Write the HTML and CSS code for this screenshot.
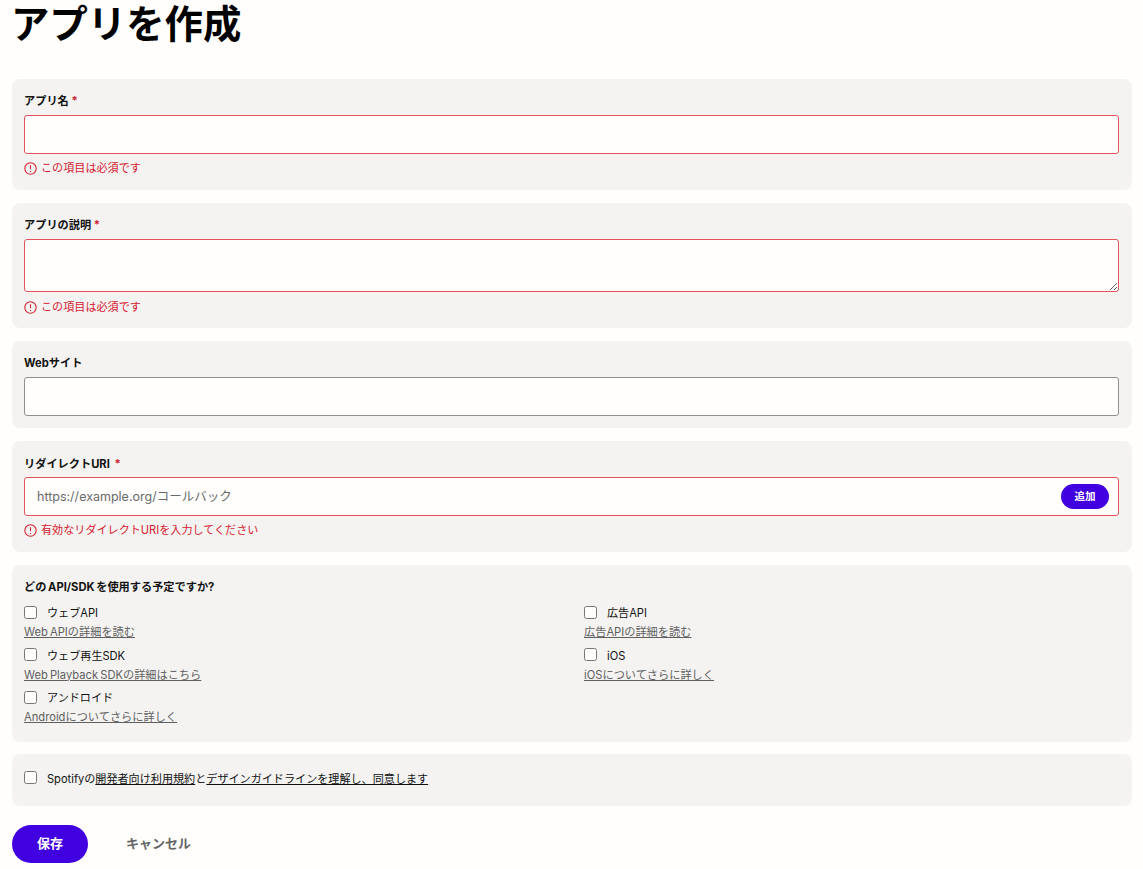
FILE: index.html
```html
<!DOCTYPE html>
<html lang="ja">
<head>
<meta charset="utf-8">
<title>アプリを作成</title>
<link rel="stylesheet" href="styles.css">
</head>
<body>
<main class="page">
  <h1 class="title">アプリを作成</h1>
  <form class="form">
    <section class="card card-name">
      <label class="label">アプリ名 <span class="req">*</span></label>
      <input class="field invalid" type="text">
      <p class="error"><svg class="err-icon" viewBox="0 0 12 12"><circle cx="6" cy="6" r="5.25"/><path d="M6 2.9v3.8M6 8.2v1"/></svg>この項目は必須です</p>
    </section>
    <section class="card card-desc">
      <label class="label">アプリの説明 <span class="req">*</span></label>
      <textarea class="field area invalid"></textarea>
      <p class="error"><svg class="err-icon" viewBox="0 0 12 12"><circle cx="6" cy="6" r="5.25"/><path d="M6 2.9v3.8M6 8.2v1"/></svg>この項目は必須です</p>
    </section>
    <section class="card card-web">
      <label class="label">Webサイト</label>
      <input class="field" type="text">
    </section>
    <section class="card card-uri">
      <label class="label">リダイレクトURI <span class="req req-gap">*</span></label>
      <div class="uri-field invalid">
        <span class="placeholder">https://example.org/コールバック</span>
        <button class="add" type="button">追加</button>
      </div>
      <p class="error"><svg class="err-icon" viewBox="0 0 12 12"><circle cx="6" cy="6" r="5.25"/><path d="M6 2.9v3.8M6 8.2v1"/></svg>有効なリダイレクトURIを入力してください</p>
    </section>
    <section class="card card-api">
      <p class="label q">どの API/SDK を使用する予定ですか?</p>
      <div class="api-grid">
        <div class="api">
          <label class="check"><input type="checkbox"><span>ウェブAPI</span></label>
          <a class="more" href="#">Web APIの詳細を読む</a>
        </div>
        <div class="api">
          <label class="check"><input type="checkbox"><span>広告API</span></label>
          <a class="more" href="#">広告APIの詳細を読む</a>
        </div>
        <div class="api">
          <label class="check"><input type="checkbox"><span>ウェブ再生SDK</span></label>
          <a class="more" href="#">Web Playback SDKの詳細はこちら</a>
        </div>
        <div class="api">
          <label class="check"><input type="checkbox"><span>iOS</span></label>
          <a class="more" href="#">iOSについてさらに詳しく</a>
        </div>
        <div class="api">
          <label class="check"><input type="checkbox"><span>アンドロイド</span></label>
          <a class="more" href="#">Androidについてさらに詳しく</a>
        </div>
      </div>
    </section>
    <section class="card card-terms">
      <label class="check"><input type="checkbox"><span class="terms">Spotifyの<a href="#">開発者向け利用規約</a>と<a href="#">デザインガイドラインを理解し、同意します</a></span></label>
    </section>
    <div class="actions">
      <button class="save" type="button">保存</button>
      <button class="cancel" type="button">キャンセル</button>
    </div>
  </form>
</main>
</body>
</html>
```

FILE: styles.css
```css
* { box-sizing: border-box; }
html, body { margin: 0; padding: 0; background: #fffefd; }
body {
  font-family: Inter, "Noto Sans CJK JP", sans-serif;
  color: #111;
  font-size: 12px;
}
.page { padding: 0 11px 0 12px; }
.title {
  margin: 0 0 0 -1px;
  height: 79px;
  font-size: 38.4px;
  line-height: 48px;
  font-weight: 700;
  color: #000;
}
.form { display: flex; flex-direction: column; gap: 13px; }
.card {
  background: #f4f3f2;
  border-radius: 8px;
  padding: 13px 13px 0 12px;
}
.card-name { height: 111px; }
.card-desc { height: 125px; }
.card-web { height: 87px; }
.card-uri { height: 111px; padding-top: 14px; }
.card-api { height: 177px; }
.card-terms { height: 52px; padding-top: 15px; margin-top: -1px; }
.label {
  display: block;
  margin: 0 0 5px;
  height: 18px;
  font-size: 11.2px;
  line-height: 18px;
  font-weight: 700;
  color: #111;
}
.card-uri .label { margin-bottom: 4px; }
.req { color: #d5202f; }
.req-gap { margin-left: 2px; }
.field {
  display: block;
  width: 100%;
  height: 39px;
  margin: 0;
  background: #fffefd;
  border: 1px solid #8f8f8f;
  border-radius: 3px;
  outline: none;
  padding: 0 12px;
  font: inherit;
}
.area { height: 53px; resize: vertical; }
.invalid { border: 1px solid #e2535c; }
.uri-field {
  display: flex;
  align-items: center;
  justify-content: space-between;
  height: 39px;
  background: #fffefd;
  border-radius: 3px;
  padding: 0 9px 0 12px;
}
.placeholder { font-size: 12.5px; color: #6a6a6a; margin-bottom: 2px; }
.add {
  width: 48px;
  height: 25px;
  border: 0;
  border-radius: 13px;
  background: #4100e0;
  color: #fff;
  font: 700 10.5px Inter, "Noto Sans CJK JP", sans-serif;
  padding: 0 0 2px;
}
.error {
  display: flex;
  align-items: center;
  gap: 4px;
  margin: 6px 0 0;
  height: 16px;
  font-size: 11.1px;
  line-height: 16px;
  color: #d5202f;
}
.card-desc .error { margin-top: 7px; }
.err-icon {
  flex: none;
  width: 13px;
  height: 13px;
  fill: none;
  stroke: #d5202f;
  stroke-width: 1;
}
.q { margin-bottom: 7px; word-spacing: -1px; }
.api-grid {
  display: grid;
  grid-template-columns: 560px 1fr;
  row-gap: 2.5px;
}
.api { display: flex; flex-direction: column; align-items: flex-start; height: 40px; }
.check {
  display: flex;
  align-items: center;
  gap: 10px;
  height: 20px;
  font-size: 11.1px;
  line-height: 20px;
  color: #111;
}
.check input {
  appearance: none;
  flex: none;
  width: 13px;
  height: 13px;
  margin: 0 0 2px;
  background: #fffefd;
  border: 1px solid #767676;
  border-radius: 2.5px;
}
.card-terms .check input { margin-bottom: 4px; }
.more {
  margin-top: -1px;
  font-size: 11.2px;
  line-height: 20px;
  color: #5f5f5f;
  text-decoration: underline;
  word-spacing: -1px;
}
.terms a { color: #111; text-decoration: underline; }
.actions {
  display: flex;
  align-items: center;
  gap: 38px;
  margin-top: 6px;
}
.save {
  width: 76px;
  height: 38px;
  border: 0;
  border-radius: 19px;
  background: #4100e0;
  color: #fff;
  font: 700 13px Inter, "Noto Sans CJK JP", sans-serif;
  padding: 0 0 4px;
}
.cancel {
  border: 0;
  background: none;
  padding: 0 0 4px;
  color: #666;
  font: 700 13px Inter, "Noto Sans CJK JP", sans-serif;
}
```
